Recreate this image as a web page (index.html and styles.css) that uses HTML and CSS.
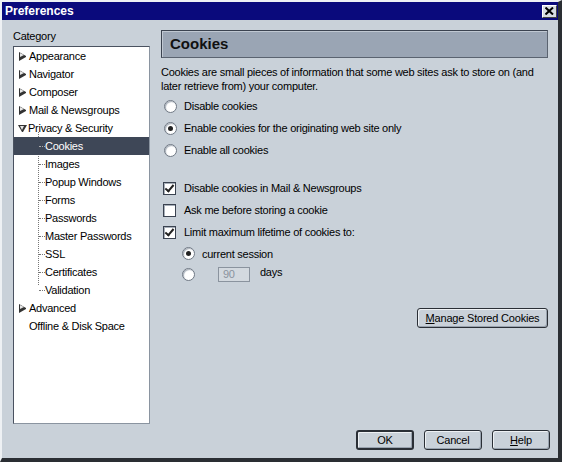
FILE: index.html
```html
<!DOCTYPE html>
<html>
<head>
<meta charset="utf-8">
<link rel="stylesheet" href="styles.css">
</head>
<body>
<div class="window">
  <div class="titlebar">
    <span class="title">Preferences</span>
    <span class="close"><svg width="9" height="8" viewBox="0 0 9 8"><path d="M0.5 0.5 L8 7.5 M8 0.5 L0.5 7.5" stroke="#000" stroke-width="2"/></svg></span>
  </div>
  <div class="main">
    <div class="leftcol">
      <div class="cat-label">Category</div>
      <div class="tree">
        <div class="row"><span class="twisty closed"></span><span>Appearance</span></div>
        <div class="row"><span class="twisty closed"></span><span>Navigator</span></div>
        <div class="row"><span class="twisty closed"></span><span>Composer</span></div>
        <div class="row"><span class="twisty closed"></span><span>Mail &amp; Newsgroups</span></div>
        <div class="row"><span class="twisty open"></span><span>Privacy &amp; Security</span></div>
        <div class="children">
          <div class="row child sel"><span class="lbl">Cookies</span></div>
          <div class="row child"><span class="lbl">Images</span></div>
          <div class="row child"><span class="lbl">Popup Windows</span></div>
          <div class="row child"><span class="lbl">Forms</span></div>
          <div class="row child"><span class="lbl">Passwords</span></div>
          <div class="row child"><span class="lbl">Master Passwords</span></div>
          <div class="row child"><span class="lbl">SSL</span></div>
          <div class="row child"><span class="lbl">Certificates</span></div>
          <div class="row child last"><span class="lbl">Validation</span></div>
        </div>
        <div class="row"><span class="twisty closed"></span><span>Advanced</span></div>
        <div class="row"><span class="twisty none"></span><span>Offline &amp; Disk Space</span></div>
      </div>
    </div>
    <div class="rightcol">
      <div class="header">Cookies</div>
      <p class="desc">Cookies are small pieces of information that some web sites ask to store on (and later retrieve from) your computer.</p>
      <div class="group">
        <div class="opt"><span class="radio"></span><span>Disable cookies</span></div>
        <div class="opt"><span class="radio on"></span><span>Enable cookies for the originating web site only</span></div>
        <div class="opt"><span class="radio"></span><span>Enable all cookies</span></div>
      </div>
      <div class="group group2">
        <div class="opt"><span class="check on"></span><span>Disable cookies in Mail &amp; Newsgroups</span></div>
        <div class="opt"><span class="check"></span><span>Ask me before storing a cookie</span></div>
        <div class="opt"><span class="check on"></span><span>Limit maximum lifetime of cookies to:</span></div>
        <div class="opt sub"><span class="radio on"></span><span>current session</span></div>
        <div class="opt sub"><span class="radio"></span><span class="numbox">90</span><span class="days">days</span></div>
      </div>
      <div class="manage-row"><button class="btn manage"><u>M</u>anage Stored Cookies</button></div>
    </div>
  </div>
  <div class="footer">
    <button class="btn ok default">OK</button>
    <button class="btn">Cancel</button>
    <button class="btn"><u>H</u>elp</button>
  </div>
</div>
</body>
</html>
```
FILE: styles.css
```css
* { box-sizing: border-box; }
html, body { margin: 0; padding: 0; }
body {
  background: #c9d1d9;
  font-family: "Liberation Sans", Arial, sans-serif;
  font-size: 11px;
  letter-spacing: -0.25px;
  color: #000;
}
.window {
  width: 562px;
  height: 462px;
  background: #c9d1d9;
  border-top: 2px solid #eef1f4;
  border-left: 2px solid #eef1f4;
  border-right: 4px solid #2a2e33;
  border-bottom: 4px solid #2a2e33;
  display: flex;
  flex-direction: column;
  position: relative;
}
.titlebar {
  height: 18px;
  background: #0a0a7c;
  display: flex;
  align-items: center;
  justify-content: space-between;
  padding: 0 0 0 3px;
}
.title {
  color: #fff;
  font-weight: bold;
  font-size: 12px;
  letter-spacing: 0;
}
.close {
  width: 15px;
  height: 13px;
  background: #d8dde2;
  border: 1px solid;
  border-color: #fff #444 #444 #fff;
  display: flex;
  align-items: center;
  justify-content: center;
  margin-right: 1px;
}
.main {
  display: flex;
  padding: 8px 0 0 11px;
  gap: 11px;
}
.leftcol {
  width: 137px;
  display: flex;
  flex-direction: column;
}
.cat-label {
  height: 16px;
  line-height: 16px;
  margin-bottom: 2px;
}
.tree {
  height: 378px;
  background: #fff;
  border: 1px solid #4a5260;
  border-right-color: #8a94a0;
  border-bottom-color: #8a94a0;
}
.row {
  height: 18px;
  display: flex;
  align-items: center;
  padding-left: 5px;
  white-space: nowrap;
}
.twisty {
  width: 7px;
  height: 9px;
  margin-right: 3px;
  position: relative;
}
.twisty.closed {
  border-style: solid;
  border-width: 4.5px 0 4.5px 7px;
  border-color: transparent transparent transparent #333;
}
.twisty.closed::after {
  content: "";
  position: absolute;
  left: -6px;
  top: -2.5px;
  border-style: solid;
  border-width: 2.5px 0 2.5px 4px;
  border-color: transparent transparent transparent #e6e6e6;
}
.twisty.open {
  width: 9px;
  height: 7px;
  margin-right: 1px;
  margin-left: -1px;
  border-style: solid;
  border-width: 7px 4.5px 0 4.5px;
  border-color: #333 transparent transparent transparent;
}
.twisty.open::after {
  content: "";
  position: absolute;
  left: -2.5px;
  top: -6px;
  border-style: solid;
  border-width: 4px 2.5px 0 2.5px;
  border-color: #e6e6e6 transparent transparent transparent;
}
.twisty.none { border: none; }
.children {
  position: relative;
}
.children::before {
  content: "";
  position: absolute;
  left: 24px;
  top: -5px;
  height: 153px;
  border-left: 1px dotted #777;
}
.row.child {
  padding-left: 25px;
  position: relative;
}
.row.child::before {
  content: "";
  width: 6px;
  border-top: 1px dotted #777;
}
.row.sel {
  background: #3e4757;
  color: #fff;
}
.row.sel::before { border-top-color: #aaa; }
.rightcol {
  width: 387px;
  padding-top: 2px;
}
.header {
  height: 28px;
  background: #9aa5b4;
  border: 1px solid #3b4350;
  border-right-color: #5a6370;
  border-bottom-color: #5a6370;
  box-shadow: inset 1px 1px 0 #c0c8d2;
  font-size: 15px;
  font-weight: bold;
  letter-spacing: 0;
  line-height: 26px;
  padding-left: 8px;
  color: #111;
}
.desc {
  margin: 7px 0 0 0;
  line-height: 14px;
  height: 29px;
}
.group { margin-top: 1px; }
.group2 { margin-top: 16px; }
.opt {
  height: 22px;
  display: flex;
  align-items: center;
  white-space: nowrap;
}
.opt.sub { padding-left: 18px; height: 21px; }
.radio {
  width: 13px;
  height: 13px;
  border-radius: 50%;
  background: #fff;
  border: 1px solid #6f7884;
  box-shadow: inset 1px 1px 1px #a8b0ba;
  margin-left: 3px;
  margin-right: 7px;
  position: relative;
}
.radio.on::after {
  content: "";
  position: absolute;
  left: 3px;
  top: 3px;
  width: 5px;
  height: 5px;
  border-radius: 50%;
  background: #222;
}
.check {
  width: 13px;
  height: 13px;
  background: #fff;
  border: 1px solid #3a4250;
  box-shadow: inset 1px 1px 0 #a8b0ba;
  margin-left: 2px;
  margin-right: 8px;
  position: relative;
}
.check.on::after {
  content: "";
  position: absolute;
  left: 3px;
  top: 0px;
  width: 3px;
  height: 7px;
  border: solid #222;
  border-width: 0 2px 2px 0;
  transform: rotate(40deg);
}
.numbox {
  width: 32px;
  height: 15px;
  border: 1px solid #8a939e;
  background: #d3d9df;
  color: #8a939e;
  line-height: 13px;
  padding-left: 4px;
  margin-left: 16px;
  margin-top: -1px;
}
.days {
  margin-left: 10px;
  margin-top: -6px;
}
.manage-row {
  display: flex;
  justify-content: flex-end;
  margin-top: 23px;
}
.btn {
  font-family: "Liberation Sans", Arial, sans-serif;
  font-size: 11px;
  letter-spacing: -0.2px;
  color: #000;
  height: 20px;
  background: #c9d1d9;
  border: 1px solid #2a2f36;
  border-radius: 3px;
  box-shadow: inset 1px 1px 0 #eef1f4, inset -1px -1px 0 #98a2ae;
  padding: 0;
  margin: 0;
}
.manage { width: 131px; }
.footer {
  display: flex;
  justify-content: flex-end;
  gap: 10px;
  padding: 0 8px 0 0;
  margin-top: 6px;
}
.footer .btn { width: 58px; }
.btn.default { border-width: 2px; }
```
